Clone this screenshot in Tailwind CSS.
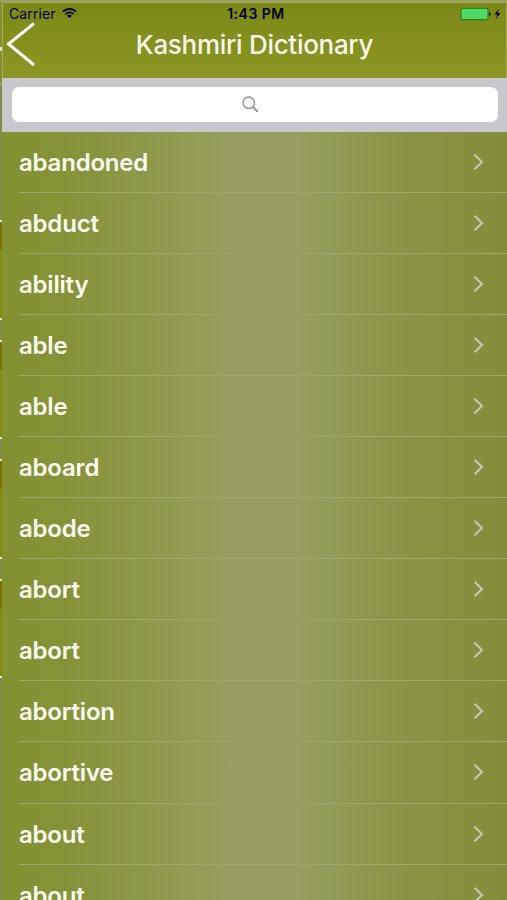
<!DOCTYPE html>
<html lang="en">
<head>
  <meta charset="UTF-8" />
  <meta name="viewport" content="width=device-width,initial-scale=1.0" />
  <title>Kashmiri Dictionary</title>
  <script src="https://cdn.jsdelivr.net/npm/@tailwindcss/browser@4"></script>
</head>

<body class="h-screen overflow-hidden bg-[#99a167] pt-[2px] font-['Inter',sans-serif]">
  <div class="flex h-full">

    <!-- edge of the previous page -->
    <aside class="flex w-[2px] shrink-0 flex-col bg-[#838b4c]">
      <div class="h-[45px] bg-[#87902f]"></div>
      <div class="h-[4px] bg-[#e4e6d4]"></div>
      <div class="h-[33px] bg-[#87902f]"></div>
      <div class="h-px bg-[#b3b98a]"></div>
      <div class="mb-[135px]"></div>
      <div id="edge"></div>
    </aside>

    <div class="flex min-w-0 flex-1 flex-col">
      <!-- header -->
      <header class="h-[76px] shrink-0 border-x border-t border-[#a3aa58] bg-linear-to-b from-[#7c8817] to-[#8c9724]">
        <div class="grid h-[22px] grid-cols-3 items-center pl-[6px] pr-[3px] text-black">
          <div class="flex items-center gap-[6px]">
            <span class="text-[14px] leading-none tracking-[0.1px]">Carrier</span>
            <svg class="mb-[3px] h-[12px] w-[15px]" viewBox="0 0 16 12" fill="none" stroke="currentColor" stroke-width="1.9">
              <path d="M1 4.6a10 10 0 0 1 14 0M3.5 7.2a6.4 6.4 0 0 1 9 0" />
              <path d="M8 11.6 5.4 9a3.7 3.7 0 0 1 5.2 0z" fill="currentColor" stroke="none" />
            </svg>
          </div>
          <span class="text-center text-[14px] font-semibold leading-none tracking-[0.5px]">1:43 PM</span>
          <svg class="mb-px h-[14px] w-[43px] justify-self-end" viewBox="0 0 43 14">
            <rect x="1" y="1.3" width="27" height="11.4" rx="1.8" fill="#4cd964" stroke="#2f6b16" />
            <path d="M29 5v4c1.3-.3 1.6-1.1 1.6-2s-.3-1.7-1.6-2z" fill="#1c2a05" />
            <path d="M38.800 2 34.500 7.500h2.600L36 12l4.700-5.900h-2.800z" fill="#000" />
          </svg>
        </div>
        <div class="flex h-[53px] items-start">
          <svg class="h-[46px] w-[36px] shrink-0 overflow-visible" viewBox="0 0 36 46" fill="none" stroke="#fff" stroke-width="3">
            <path d="M31 -1.500 5.500 19 31 40" />
          </svg>
          <h1 class="flex-1 pr-[36px] pt-[4px] text-center text-[26px] font-medium leading-[32px] tracking-[-0.3px] text-[#f8f6ec]">Kashmiri Dictionary</h1>
        </div>
      </header>

      <!-- search -->
      <div class="h-[53.500px] shrink-0 bg-[#c8c7cd] pb-[10px] pl-[10px] pr-[9px] pt-[9px]">
        <div class="flex h-[35px] items-center justify-center rounded-[7px] bg-white pr-[10px]">
          <svg class="h-[17px] w-[17px]" viewBox="0 0 17 17" fill="none" stroke="#8e8e93">
            <circle cx="6.700" cy="6.700" r="5.700" stroke-width="1.300" />
            <path d="m10.900 10.900 5 5" stroke-width="1.900" />
          </svg>
        </div>
      </div>

      <!-- word list -->
      <ul id="words" class="min-h-0 flex-1 overflow-hidden bg-[linear-gradient(90deg,#849131_0%,#869237_12%,#979e5f_45%,#979e60_58%,#8a9345_80%,#858d3a_100%)]"></ul>
    </div>
  </div>

  <script>
    const words = ["abandoned", "abduct", "ability", "able", "able", "aboard", "abode",
                   "abort", "abort", "abortion", "abortive", "about", "about"];

    document.getElementById("words").innerHTML = words.map(w => `
      <li class="flex h-[61.1px] pl-[17px]">
        <div class="flex flex-1 items-center justify-between border-b border-[#a0a76d] pr-[22px]">
          <span class="pt-[2px] text-[24px] font-semibold leading-[30px] tracking-[-0.2px] text-[#fdfdf3]">${w}</span>
          <svg class="h-[18px] w-[12px]" viewBox="0 0 12 18" fill="none" stroke="#c7c9bd" stroke-width="2">
            <path d="m1.500 1.700 7.500 7.300-7.500 7.300" />
          </svg>
        </div>
      </li>`).join("");

    /* four cells peeking out on the left */
    document.getElementById("edge").innerHTML = [0, 1, 2, 3].map(() => `
      <div class="mb-[20px] flex h-[99.500px] flex-col border-y-2 border-[#e6e8da] bg-[#858b0c]">
        <div class="h-[28px] bg-[#7c7405]"></div>
      </div>`).join("");
  </script>
</body>
</html>
